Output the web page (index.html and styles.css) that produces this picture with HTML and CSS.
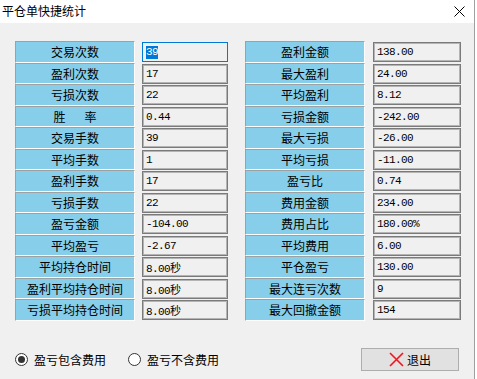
FILE: index.html
```html
<!DOCTYPE html>
<html lang="zh-CN">

<head>
    <meta charset="UTF-8">
    <title>平仓单快捷统计</title>
    <link rel="stylesheet" href="styles.css">
</head>

<body>
    <div class="dialog">
        <div class="titlebar">
            <span class="title">平仓单快捷统计</span>
            <svg class="close" width="11" height="11" viewBox="0 0 11 11">
                <path d="M0.5 0.5 L10.5 10.5 M10.5 0.5 L0.5 10.5" stroke="#000" stroke-width="1" fill="none" />
            </svg>
        </div>

        <div class="content">
            <div class="stats">
                <div class="column">
                    <div class="row"><div class="label">交易次数</div><div class="value focused"><span class="selected">39</span></div></div>
                    <div class="row"><div class="label">盈利次数</div><div class="value">17</div></div>
                    <div class="row"><div class="label">亏损次数</div><div class="value">22</div></div>
                    <div class="row"><div class="label">胜<span class="gap"></span>率</div><div class="value">0.44</div></div>
                    <div class="row"><div class="label">交易手数</div><div class="value">39</div></div>
                    <div class="row"><div class="label">平均手数</div><div class="value">1</div></div>
                    <div class="row"><div class="label">盈利手数</div><div class="value">17</div></div>
                    <div class="row"><div class="label">亏损手数</div><div class="value">22</div></div>
                    <div class="row"><div class="label">盈亏金额</div><div class="value">-104.00</div></div>
                    <div class="row"><div class="label">平均盈亏</div><div class="value">-2.67</div></div>
                    <div class="row"><div class="label">平均持仓时间</div><div class="value">8.00秒</div></div>
                    <div class="row"><div class="label">盈利平均持仓时间</div><div class="value">8.00秒</div></div>
                    <div class="row"><div class="label">亏损平均持仓时间</div><div class="value">8.00秒</div></div>
                </div>

                <div class="column right">
                    <div class="row"><div class="label">盈利金额</div><div class="value">138.00</div></div>
                    <div class="row"><div class="label">最大盈利</div><div class="value">24.00</div></div>
                    <div class="row"><div class="label">平均盈利</div><div class="value">8.12</div></div>
                    <div class="row"><div class="label">亏损金额</div><div class="value">-242.00</div></div>
                    <div class="row"><div class="label">最大亏损</div><div class="value">-26.00</div></div>
                    <div class="row"><div class="label">平均亏损</div><div class="value">-11.00</div></div>
                    <div class="row"><div class="label">盈亏比</div><div class="value">0.74</div></div>
                    <div class="row"><div class="label">费用金额</div><div class="value">234.00</div></div>
                    <div class="row"><div class="label">费用占比</div><div class="value">180.00%</div></div>
                    <div class="row"><div class="label">平均费用</div><div class="value">6.00</div></div>
                    <div class="row"><div class="label">平仓盈亏</div><div class="value">130.00</div></div>
                    <div class="row"><div class="label">最大连亏次数</div><div class="value">9</div></div>
                    <div class="row"><div class="label">最大回撤金额</div><div class="value">154</div></div>
                </div>
            </div>

            <div class="footer">
                <label class="radio"><span class="circle checked"></span>盈亏包含费用</label>
                <label class="radio second"><span class="circle"></span>盈亏不含费用</label>
                <button class="exit">
                    <svg width="15" height="15" viewBox="0 0 15 15">
                        <path d="M1 1 L14 14 M14 1 L1 14" stroke="#f0141e" stroke-width="1.6" fill="none" />
                    </svg>
                    退出
                </button>
            </div>
        </div>
    </div>
</body>

</html>
```

FILE: styles.css
```css
* {
    margin: 0;
    padding: 0;
    box-sizing: border-box;
}

body {
    background-color: #fff;
    font-family: "Noto Sans CJK SC", sans-serif;
    font-size: 12px;
    color: #000;
}

.dialog {
    width: 475px;
    height: 379px;
    background-color: #f0f0f0;
    border-right: 1px solid #a0a0a0;
}

.titlebar {
    height: 23px;
    background-color: #fff;
    display: flex;
    align-items: center;
    justify-content: space-between;
    padding: 0 9px 1px 2px;
}

.title {
    font-size: 12px;
    line-height: 14px;
}

.content {
    padding: 18px 0 0 15px;
}

.stats {
    display: flex;
    gap: 17px;
}

.column {
    width: 213px;
    display: flex;
    flex-direction: column;
}

.column.right {
    width: 216px;
}

.row {
    height: 21.5px;
    display: flex;
    gap: 7px;
}

.right .row {
    gap: 8px;
}

.label {
    width: 120px;
    height: 100%;
    background-color: #87ceeb;
    border-top: 1px solid #a0a0a0;
    border-left: 1px solid #a0a0a0;
    border-bottom: 1px solid #fff;
    border-right: 1px solid #fff;
    display: flex;
    align-items: center;
    justify-content: center;
    font-size: 12px;
}

.gap {
    display: inline-block;
    width: 19px;
}

.value {
    flex: 1;
    height: 20px;
    margin-top: 1px;
    border: 1px solid #7a7a7a;
    box-shadow: inset 0 0 0 1px #b4b4b4;
    padding-left: 3px;
    display: flex;
    align-items: center;
    font-family: "Liberation Mono", "Noto Sans CJK SC", monospace;
    font-size: 11px;
    letter-spacing: -0.6px;
}

.value.focused {
    border-color: #0078d7;
    box-shadow: none;
}

.selected {
    background-color: #0078d7;
    color: #fff;
    line-height: 13px;
}

.footer {
    display: flex;
    align-items: center;
    margin-top: 27px;
}

.radio {
    display: flex;
    align-items: center;
    gap: 6px;
    font-size: 12px;
}

.radio.second {
    margin-left: 22px;
}

.circle {
    width: 13px;
    height: 13px;
    border: 1px solid #333;
    border-radius: 50%;
    background-color: #fff;
    display: flex;
    align-items: center;
    justify-content: center;
}

.circle.checked::after {
    content: "";
    width: 7px;
    height: 7px;
    border-radius: 50%;
    background-color: #333;
}

.exit {
    margin-left: auto;
    margin-right: 15px;
    width: 98px;
    height: 23px;
    background-color: #e1e1e1;
    border: 1px solid #adadad;
    display: flex;
    align-items: center;
    justify-content: center;
    gap: 3px;
    font-family: "Noto Sans CJK SC", sans-serif;
    font-size: 12px;
    color: #000;
}
```
